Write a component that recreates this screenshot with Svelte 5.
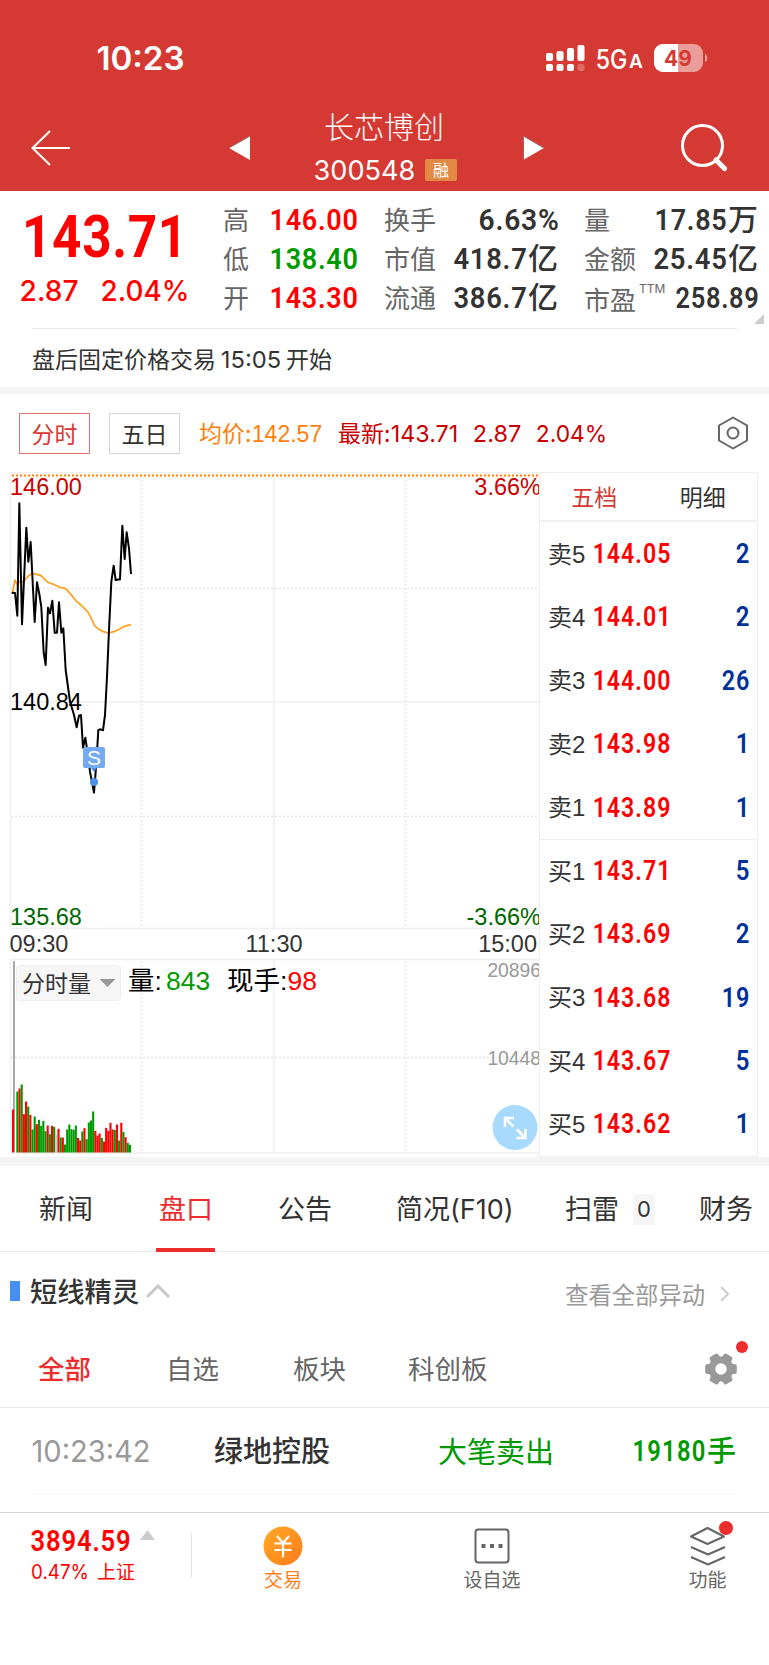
<script>
	const stats = [
		[
			{ label: '高', value: '146.00', w: 86, color: 'up semi' },
			{ label: '低', value: '138.40', w: 86, color: 'down semi' },
			{ label: '开', value: '143.30', w: 86, color: 'up semi' }
		],
		[
			{ label: '换手', value: '6.63%', w: 78 },
			{ label: '市值', value: '418.7', w: 71, unit: '亿' },
			{ label: '流通', value: '386.7', w: 71, unit: '亿' }
		],
		[
			{ label: '量', value: '17.85', w: 70, unit: '万' },
			{ label: '金额', value: '25.45', w: 71, unit: '亿' },
			{ label: '市盈', sup: 'TTM', value: '258.89', w: 81 }
		]
	];

	const book = [
		['卖', 5, '144.05', 2],
		['卖', 4, '144.01', 2],
		['卖', 3, '144.00', 26],
		['卖', 2, '143.98', 1],
		['卖', 1, '143.89', 1],
		['买', 1, '143.71', 5],
		['买', 2, '143.69', 2],
		['买', 3, '143.68', 19],
		['买', 4, '143.67', 5],
		['买', 5, '143.62', 1]
	];

	const price =
		'35,368 45,369 52,437 58,100 66,463 79,173 85,275 92,216 104,456 111,337 118,372 124,412 131,547 137,585 144,413 150,430 157,392 164,488 171,488 177,397 184,488 190,475 197,600 210,695 222,735 230,772 237,737 243,735 249,833 256,803 263,850 270,905 282,968 289,880 295,780 302,778 309,781 315,735 321,620 327,480 334,335 341,287 347,330 360,328 367,167 374,267 380,187 387,235 393,312';
	const average =
		'38,366 45,330 52,345 58,334 70,335 85,318 97,310 122,316 144,337 160,343 177,351 197,356 215,376 230,395 243,405 263,425 275,447 284,467 295,477 310,485 325,489 342,485 357,478 373,469 393,464';

	// r = up minute, g = down minute, n = flat
	const volume =
		'r129 n0 g183 r192 g204 r115 r153 g138 r113 g69 g108 r85 g98 g80 g95 g64 r81 g55 r80 g77 n54 r71 g45 r45 g24 g69 g84 g70 g68 g81 r44 r36 g63 r73 g40 g90 g96 g123 r65 r51 r57 g44 r33 r74 r65 r89 r69 g68 r84 g36 r89 g62 r46 g29 g23'
			.split(' ')
			.map((v) => ({ side: v[0], h: v.slice(1) / 3 }));

	const ratio = { din: 0.711, sf: 0.727, hv: 0.7 };
</script>

<!-- numerals set to a fixed width, the box is exactly as tall as the digits -->
{#snippet num(text, w, h, font, color)}
	{@const size = h / ratio[font]}
	<svg class="num {font} {color}" width={w} height={h}>
		<text x={-size * 0.05} y={h} font-size={size} textLength={w + size * 0.1} lengthAdjust="spacingAndGlyphs">{text}</text>
	</svg>
{/snippet}

<main>
	<header>
		<div class="status">
			{@render num('10:23', 85, 23.5, 'sf', 'white semi')}
			<div class="status-right">
				<svg width="39" height="28" viewBox="0 0 39 28" fill="#fff">
					<rect x="0" y="9" width="7" height="8" rx="2" />
					<rect x="10.500" y="7" width="7" height="10" rx="2" />
					<rect x="21" y="4" width="7" height="13" rx="2" />
					<rect x="31.500" y="1" width="7" height="16" rx="2" />
					<rect x="0" y="20" width="7" height="7" rx="2" />
					<rect x="10.500" y="20" width="7" height="7" rx="2" />
					<rect x="21" y="20" width="7" height="7" rx="2" />
					<rect x="31.500" y="20" width="7" height="7" rx="2" opacity=".25" />
				</svg>
				<div class="net">
					{@render num('5G', 29, 19.5, 'sf', 'white medium')}
					{@render num('A', 12, 14, 'sf', 'white semi')}
				</div>
				<svg width="54" height="28" viewBox="0 0 54 28">
					<rect width="49" height="28" rx="9" fill="#ea9d99" />
					<path d="M24 0H9a9 9 0 0 0-9 9v10a9 9 0 0 0 9 9h15z" fill="#fff" />
					<path d="M51 10c3 1 3 7 0 8z" fill="#ea9d99" />
					<text class="battery" x="24" y="21.500" text-anchor="middle">49</text>
				</svg>
			</div>
		</div>
		<div class="nav">
			<svg width="40" height="36" viewBox="0 0 40 36" fill="none" stroke="#fff" stroke-width="2">
				<path d="M19 1 1.500 18 19 35M1.500 18H39" />
			</svg>
			<svg width="21" height="24" viewBox="0 0 21 24"><path d="M0 12 21 0v24z" fill="#fff" /><path d="M0 12 21 0" stroke="#9a6461" /></svg>
			<div class="title">
				<h1>长芯博创</h1>
				<div class="code">
					{@render num('300548', 99, 20, 'sf', 'white')}
					<span class="tag">融</span>
				</div>
			</div>
			<svg width="21" height="24" viewBox="0 0 21 24"><path d="M21 12 0 0v24z" fill="#fff" /><path d="M.5 24V0L21 12" fill="none" stroke="#9a6461" /></svg>
			<svg class="search" width="47" height="48" viewBox="0 0 47 48" fill="none" stroke="#fff">
				<circle cx="21.500" cy="21.500" r="20" stroke-width="3" />
				<path d="m35 36 8.500 8.500" stroke-width="5" stroke-linecap="round" />
			</svg>
		</div>
	</header>

	<section class="quote">
		<div class="last">
			{@render num('143.71', 160, 42, 'din', 'up bold')}
			<div class="change">
				{@render num('2.87', 56, 20.5, 'sf', 'up medium')}
				{@render num('2.04%', 86, 20.5, 'sf', 'up medium')}
			</div>
		</div>
		{#each stats as col}
			<div class="stats">
				{#each col as s}
					<div class="stat">
						<span class="label" class:low={s.sup}>{s.label}{#if s.sup}<sup>{s.sup}</sup>{/if}</span>
						<span class="value">
							{@render num(s.value, s.w, 21.5, 'din', s.color ?? 'dark semi')}
							{#if s.unit}<b>{s.unit}</b>{/if}
						</span>
					</div>
				{/each}
			</div>
		{/each}
		<i class="corner"></i>
	</section>

	<section class="notice">
		<span>盘后固定价格交易</span>
		{@render num('15:05', 58, 17, 'sf', 'dark')}
		<span>开始</span>
	</section>

	<section class="toolbar">
		<button class="on">分时</button>
		<button>五日</button>
		<span class="avg">均价:</span>
		{@render num('142.57', 68, 17, 'hv', 'orange')}
		<span class="cur">最新:</span>
		{@render num('143.71', 65, 17, 'sf', 'deep')}
		{@render num('2.87', 46, 17, 'sf', 'deep')}
		{@render num('2.04%', 69, 17, 'sf', 'deep')}
		<svg class="hex" width="32" height="34" viewBox="0 0 32 34" fill="none" stroke="#666" stroke-width="2">
			<path d="M16 1.500 30 9.500v15L16 32.500 2 24.500v-15z" stroke-linejoin="round" />
			<circle cx="16" cy="17" r="5.500" />
		</svg>
	</section>

	<section class="trade">
		<svg class="chart" width="540" height="685" viewBox="0 472 540 685">
			<g class="grid">
				<path d="M10.500 472.500H540M10.500 472V929M10.500 702H540M10.500 928.500H540M274 472V929M10.500 959.500H540M10.500 959V1153M274 959V1153M10.500 1153H540" />
				<path class="dots" d="M141.500 480V928M405.500 480V928M11 588.500H540M11 816.500H540M141.500 961V1152M405.500 961V1152M11 1057.500H540" />
			</g>
			<path class="limit" d="M12 475.500H539" />
			<g transform="translate(0 470) scale(.33333)" fill="none" stroke-width="6" stroke-linejoin="round">
				<polyline points={average} stroke="#ff9f1a" stroke-width="5" />
				<polyline points={price} stroke="#000" />
			</g>
			<text x="10" y="494.500" class="deep">146.00</text>
			<text x="541" y="494.500" class="deep end">3.66%</text>
			<text x="10" y="709.500">140.84</text>
			<text x="10" y="924.500" class="low">135.68</text>
			<text x="541" y="924.500" class="low end">-3.66%</text>
			<text x="9.500" y="952" class="dark">09:30</text>
			<text x="274" y="952" class="dark mid">11:30</text>
			<text x="537" y="952" class="dark end">15:00</text>

			<g class="marker">
				<rect x="83" y="747" width="22" height="21" rx="2" />
				<path d="m91 768 3 4 3-4z" />
				<circle cx="94" cy="782" r="4" />
				<text x="94" y="765">S</text>
			</g>

			<path d="M14 961V1152" stroke="#aaa" stroke-width="2" />
			{#each volume as v, i}
				<rect class="bar {v.side}" x={12 + i * 2.165} y={1152.5 - v.h} width="2.1" height={v.h} />
			{/each}

			<rect x="16.500" y="965.500" width="104" height="35" rx="3" fill="#f6f6f6" stroke="#eee" />
			<text x="22" y="991.500" class="dark menu">分时量</text>
			<path d="M99.500 979H115.500L107.500 987z" fill="#999" />
			<text x="128" y="990" class="big">量:</text>
			<text x="166" y="990" class="big down">843</text>
			<text x="227" y="990" class="big">现手:</text>
			<text x="287.500" y="990" class="big up">98</text>
			<text x="541" y="977" class="small end">20896</text>
			<text x="541" y="1065" class="small end">10448</text>

			<circle cx="515" cy="1127.500" r="22.500" fill="#a8daff" />
			<path d="M505 1127V1118H514M505.500 1118.500 513.500 1126.500M525.500 1129V1138H516.500M525 1137.500 517 1129.500" fill="none" stroke="#fff" stroke-width="2.500" />
		</svg>

		<div class="book">
			<div class="book-tabs"><span class="on">五档</span><span>明细</span></div>
			{#each book as [side, level, p, qty], i}
				<div class="order" class:split={i === 5}>
					<span>{side}{level}</span>
					{@render num(p, 76, 19.5, 'din', 'up semi')}
					{@render num(String(qty), qty > 9 ? 26 : 12, 19.5, 'din', 'blue semi')}
				</div>
			{/each}
		</div>
	</section>

	<nav class="tabs">
		<span>新闻</span>
		<span class="on">盘口</span>
		<span>公告</span>
		<span>简况(F10)</span>
		<span>扫雷<em>0</em></span>
		<span>财务</span>
	</nav>

	<section class="radar">
		<i></i>
		<h2>短线精灵</h2>
		<svg width="24" height="14" viewBox="0 0 24 14" fill="none" stroke="#c8c8c8" stroke-width="3"><path d="M1 13 12 2l11 11" /></svg>
		<span>查看全部异动</span>
		<svg width="10" height="16" viewBox="0 0 10 16" fill="none" stroke="#ccc" stroke-width="2"><path d="m1 1 7 7-7 7" /></svg>
	</section>

	<nav class="filters">
		<span class="on">全部</span>
		<span>自选</span>
		<span>板块</span>
		<span>科创板</span>
		<div class="gear">
			<svg width="32" height="32" viewBox="-16 -16 32 32" fill="#999">
				<circle r="9" fill="none" stroke="#999" stroke-width="6.500" />
				{#each [0, 60, 120, 180, 240, 300] as a}
					<path d="M9-6.500 12.500-5 14.500-4.800Q15.800-4.500 15.800-3V3Q15.800 4.500 14.500 4.800L12.500 5 9 6.500z" transform="rotate({a})" />
				{/each}
			</svg>
			<i></i>
		</div>
	</nav>

	<section class="event">
		{@render num('10:23:42', 116, 21.5, 'sf', 'grey')}
		<b>绿地控股</b>
		<span>大笔卖出</span>
		<div class="lots">
			{@render num('19180', 71, 20.5, 'din', 'down semi')}
			<b>手</b>
		</div>
	</section>

	<footer>
		<div class="index">
			<div class="row">
				{@render num('3894.59', 98, 20.5, 'din', 'up semi')}
				<svg width="15" height="10" viewBox="0 0 15 10"><path d="M0 10 7.500 0 15 10z" fill="#ccc" /></svg>
			</div>
			<div class="row">
				{@render num('0.47%', 56, 14.5, 'sf', 'up')}
				<span>上证</span>
			</div>
		</div>
		<div class="item trade-btn">
			<svg width="40" height="40" viewBox="0 0 40 40">
				<defs>
					<linearGradient id="coin" x1="0" y1="0" x2="1" y2="1">
						<stop offset="0" stop-color="#ffab26" />
						<stop offset="1" stop-color="#ff7a1a" />
					</linearGradient>
				</defs>
				<circle cx="20" cy="20" r="19.500" fill="url(#coin)" />
				<path d="m14 10 6 7 6-7M20 17v14.500M11.500 17.500h17M11.500 24h17" fill="none" stroke="#fff" stroke-width="2.200" />
			</svg>
			<span>交易</span>
		</div>
		<div class="item">
			<svg width="40" height="40" viewBox="0 0 40 40">
				<rect x="3.500" y="3.500" width="33" height="33" rx="3" fill="none" stroke="#666" stroke-width="2" />
				<path d="M9.500 18h4v4h-4zM18 18h4v4h-4zM26.500 18h4v4h-4z" fill="#666" />
			</svg>
			<span>设自选</span>
		</div>
		<div class="item more">
			<svg width="40" height="40" viewBox="0 0 40 40" fill="none" stroke="#666" stroke-width="2" stroke-linejoin="round">
				<path d="M19.500 2 36 10.500 19.500 18 3 10.500zM3 21l17 7.500L37 21M3 31l17 7.500L37 31" />
			</svg>
			<i></i>
			<span>功能</span>
		</div>
	</footer>
</main>

<style>
	:global(body) {
		margin: 0;
		background: #fff;
	}

	main {
		width: 769px;
		height: 1665px;
		overflow: hidden;
		font-family: 'Noto Sans CJK SC', sans-serif;
		line-height: 1;
		color: #333;
	}

	main * {
		box-sizing: border-box;
	}

	svg {
		display: block;
		flex: none;
	}

	.num { overflow: visible; fill: currentColor; }
	.din { font-family: Roboto, sans-serif; letter-spacing: .05em; }
	.sf { font-family: Inter, sans-serif; }
	.hv { font-family: 'Liberation Sans', sans-serif; }
	.medium { font-weight: 500; }
	.semi { font-weight: 600; }
	.bold { font-weight: 700; }
	.white { color: #fff; }
	.up { color: #f00; }
	.down { color: #090; }
	.dark { color: #333; }
	.orange { color: #ff7f0e; }
	.deep { color: #c80000; }
	.blue { color: #00309a; }
	.grey { color: #999; }

	header {
		height: 191px;
		background: #d43a33;
		color: #fff;
	}

	.status {
		display: flex;
		justify-content: space-between;
		align-items: center;
		height: 72px;
		padding: 43px 61px 0 98px;
	}

	.status-right {
		display: flex;
		align-items: center;
		gap: 12px;
	}

	.net {
		display: flex;
		align-items: flex-end;
		gap: 4px;
		width: 45px;
		margin-top: 2px;
	}

	.battery {
		font: 700 21px Inter, sans-serif;
		fill: #d43a33;
	}

	.nav {
		display: grid;
		grid-template-columns: 198px 76px 218px 158px 1fr;
		align-items: center;
		height: 119px;
		padding-left: 31px;
	}

	.nav > svg { margin-top: 32px; }

	.title {
		padding: 28px 0 0 10px;
	}

	h1 {
		margin: 0 0 0 9px;
		height: 49px;
		font-size: 30px;
		font-weight: 300;
		line-height: 30px;
	}

	.code {
		display: flex;
		align-items: center;
		gap: 11px;
	}

	.tag {
		width: 32px;
		height: 22px;
		border-radius: 2px;
		background: #e28a43;
		font-size: 16px;
		line-height: 20px;
		text-align: center;
	}

	.quote {
		position: relative;
		display: flex;
		height: 137px;
	}

	.last {
		width: 223px;
		padding: 24px 0 0 25px;
	}

	.change {
		display: flex;
		gap: 25px;
		margin: 23px 0 0 -4px;
	}

	.stats {
		width: 134px;
		padding-top: 8px;
		margin-right: 27px;
	}

	.stats:nth-child(3) { width: 174px; margin-right: 26px; }
	.stats:nth-child(4) { width: 174px; margin: 0; }

	.stat {
		display: flex;
		justify-content: space-between;
		height: 39px;
	}

	.label {
		color: #666;
		font-size: 26px;
		line-height: 39px;
		white-space: nowrap;
	}

	.label.low { padding-top: 2px; }

	sup {
		font: 12px Inter, sans-serif;
		vertical-align: 17px;
		line-height: 0;
		margin-left: 3px;
	}

	.value {
		display: flex;
		align-items: center;
	}

	.value b {
		width: 30px;
		font-size: 30px;
		font-weight: 500;
		margin-left: 2px;
		margin-top: -4px;
	}

	.corner {
		position: absolute;
		right: 5px;
		bottom: 4px;
		border: 5px solid #ccc;
		border-top-color: transparent;
		border-left-color: transparent;
	}

	.notice {
		display: flex;
		align-items: center;
		gap: 6px;
		height: 59px;
		margin: 0 32px;
		border-top: 1px solid #e8e8e8;
		font-size: 23px;
	}

	.notice .num { margin-top: 2px; }

	.toolbar {
		display: flex;
		align-items: center;
		height: 85px;
		padding-left: 19px;
		border-top: 7px solid #f4f4f4;
		font-size: 23px;
	}

	.toolbar span { margin-top: -1px; }

	button {
		width: 71px;
		height: 41px;
		padding: 0;
		margin-right: 19px;
		border: 1px solid #d4d4d4;
		background: #fff;
		color: #333;
		font: 23px/34px 'Noto Sans CJK SC', sans-serif;
	}

	button.on {
		border-color: #e0736e;
		color: #d43a33;
	}

	.avg { color: #ff7f0e; width: 54px; }
	.toolbar .cur { color: #c80000; width: 54px; margin-left: 17px; }
	.toolbar .num + .num { margin-left: 17px; }
	.hex { margin: 0 20px 0 auto; }

	.trade {
		display: flex;
		height: 685px;
	}

	.grid { stroke: #f0f0f0; stroke-width: 1.5; }
	.dots { stroke: #e6e6e6; stroke-dasharray: 2 2; }
	.limit { stroke: #ff7f0e; stroke-width: 2; stroke-dasharray: 2 2; }

	.chart text {
		font: 23.5px 'Liberation Sans', 'Noto Sans CJK SC', sans-serif;
		fill: #000;
	}

	.chart text.menu { font-size: 23px; }
	.chart text.big { font-size: 26.5px; }
	.chart text.small { font-size: 19.3px; fill: #999; }
	.chart text.deep { fill: #c80000; }
	.chart text.low { fill: #060; }
	.chart text.dark { fill: #333; }
	.chart text.up { fill: #f00; }
	.chart text.down { fill: #090; }
	.end { text-anchor: end; }
	.mid { text-anchor: middle; }
	.marker { fill: #4a90e8; }
	.marker rect { fill: #74aaf2; }
	.chart .marker text { font-size: 21px; fill: #fff; text-anchor: middle; }
	.r { fill: #f00; }
	.g { fill: #090; }
	.n { fill: #ccc; }

	.book {
		width: 218px;
		border: 1px solid #eee;
		border-width: 1px 1px 1px 0;
		box-shadow: -1px 0 #eee;
	}

	.book-tabs {
		display: flex;
		justify-content: space-around;
		align-items: center;
		height: 49px;
		border-bottom: 2px solid #f0f0f0;
		font-size: 23px;
	}

	.book-tabs .on { color: #d43a33; }

	.order {
		display: flex;
		align-items: center;
		height: 63.4px;
		padding: 0 8px 2px;
		font: 24px 'Liberation Sans', 'Noto Sans CJK SC', sans-serif;
	}

	.order span { width: 46px; margin-top: -1px; }
	.order .num:last-child { margin-left: auto; }
	.split { border-top: 1px solid #eee; }

	.tabs {
		display: grid;
		grid-template-columns: 120px 119px 118px 169px 134px 1fr;
		height: 95px;
		padding-left: 39px;
		border-top: 9px solid #f4f4f4;
		border-bottom: 1px solid #e8e8e8;
		font: 27px/88px Inter, 'Noto Sans CJK SC', sans-serif;
		white-space: nowrap;
	}

	.tabs span { height: 85px; }

	.tabs .on {
		position: relative;
		color: #ec2d2d;
	}

	.tabs .on::after {
		content: '';
		position: absolute;
		left: -3px;
		bottom: -1px;
		width: 59px;
		height: 4px;
		background: #ec2d2d;
	}

	em {
		display: inline-block;
		width: 22px;
		height: 31px;
		margin-left: 14px;
		background: #f5f5f5;
		font: 22px/31px Inter, sans-serif;
		text-align: center;
		vertical-align: 2px;
	}

	.radar {
		display: flex;
		align-items: center;
		height: 79px;
		padding: 0 39px 2px 10px;
	}

	.radar i {
		width: 10px;
		height: 20px;
		background: #448ff0;
	}

	h2 {
		margin: 0 7px 0 10px;
		font-size: 27.3px;
		font-weight: 500;
	}

	.radar span {
		margin: 8px 15px 0 auto;
		font-size: 23.3px;
		color: #999;
	}

	.radar svg:last-child { margin-top: 7px; }

	.filters {
		display: grid;
		grid-template-columns: 128px 127px 115px 297px 1fr;
		align-items: center;
		height: 77px;
		padding-left: 38px;
		border-bottom: 1px solid #e8e8e8;
		font-size: 26.5px;
		color: #666;
	}

	.filters span { margin-top: -2px; }

	.filters .on {
		color: #ec2d2d;
		font-weight: 500;
	}

	.gear {
		position: relative;
		width: 32px;
	}

	.gear i,
	.item i {
		position: absolute;
		width: 12px;
		height: 12px;
		border-radius: 50%;
		background: #ec2d2d;
		left: 31px;
		top: -12px;
	}

	.event {
		display: grid;
		grid-template-columns: 181px 224px 196px 1fr;
		align-items: center;
		height: 86px;
		margin: 0 32px 18px;
		padding-left: 1px;
		border-bottom: 1px solid #f4f4f4;
		font-size: 29px;
	}

	.event b { font-weight: 500; margin-top: -2px; }
	.event span { color: #090; margin-top: -1px; }

	.lots {
		display: flex;
		align-items: center;
		color: #090;
		gap: 2px;
	}

	footer {
		display: grid;
		grid-template-columns: 192px 182px 236px 1fr;
		height: 153px;
		border-top: 1px solid #d8d8d8;
		font-size: 19px;
	}

	.index {
		height: 45px;
		margin-top: 20px;
		border-right: 1px solid #e4e4e4;
		padding-left: 32px;
	}

	.row {
		display: flex;
		gap: 10px;
		height: 28px;
		margin-top: -3px;
	}

	.row + .row {
		align-items: center;
		gap: 9px;
		margin-top: -1px;
		color: #f00;
	}

	.row span { margin-top: -2px; }

	.item {
		position: relative;
		display: flex;
		flex-direction: column;
		align-items: center;
		padding-top: 13px;
		gap: 3px;
		color: #666;
	}

	.trade-btn { color: #ff7f1a; }
	.more { padding-left: 36px; }

	.item i {
		width: 14px;
		height: 14px;
		left: 109px;
		top: 8px;
	}
</style>
